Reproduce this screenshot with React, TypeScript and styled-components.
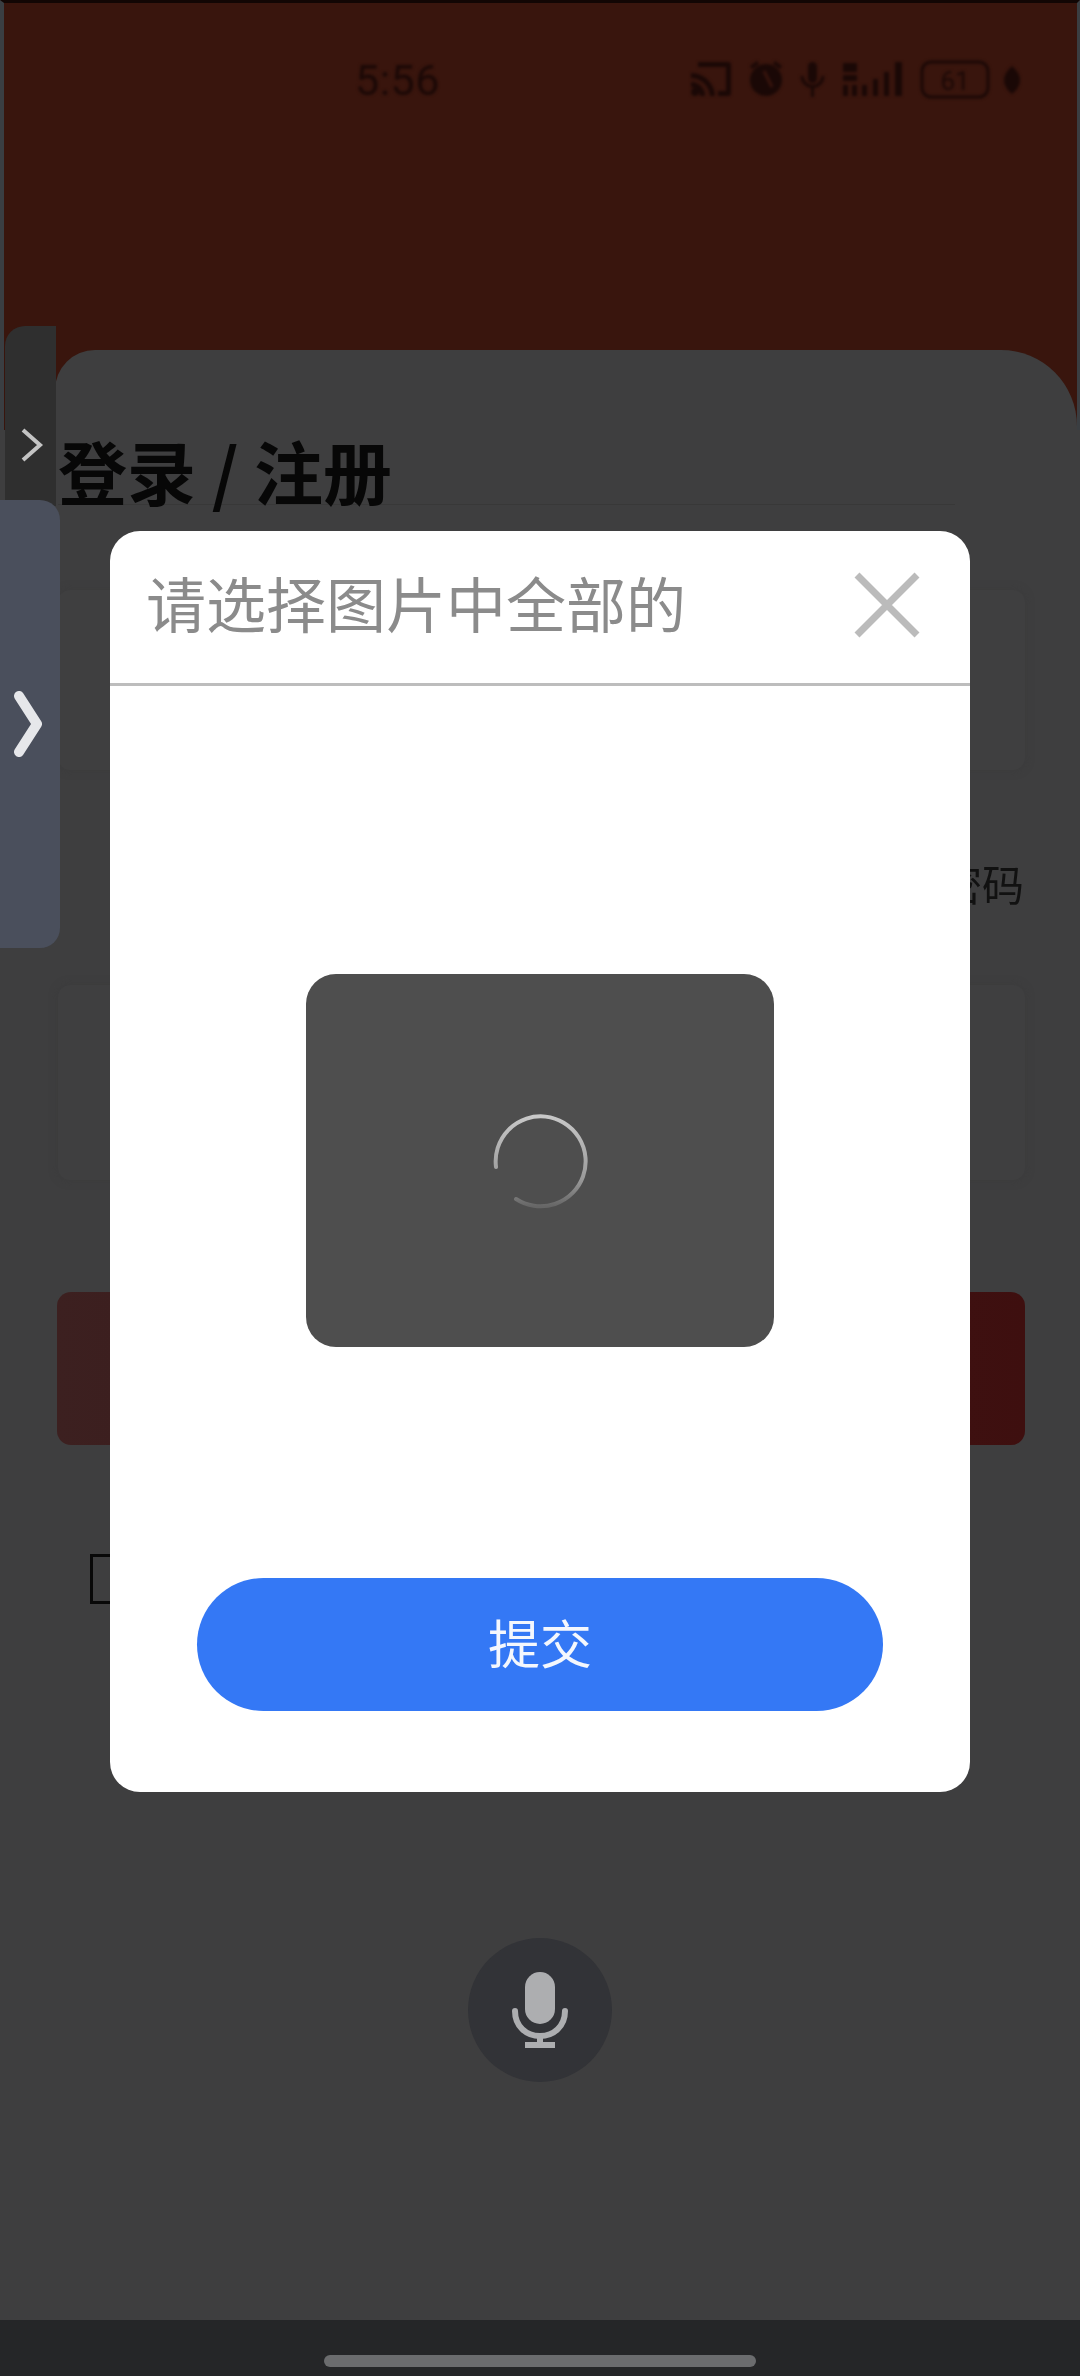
import styled, { createGlobalStyle } from "styled-components";

const GlobalStyle = createGlobalStyle`
  html, body {
    margin: 0;
    padding: 0;
    background: #3e3e3f;
  }
  * {
    box-sizing: border-box;
  }
`;

const Screen = styled("div")`
  position: relative;
  width: 1080px;
  height: 2376px;
  overflow: hidden;
  display: flex;
  flex-direction: column;
  background-color: #3e3e3f;
  font-family: "Noto Sans CJK SC", "Noto Sans", sans-serif;
`;
const TopArea = styled("header")`
  height: 430px;
  flex-shrink: 0;
  background-color: #39150d;
  border-top: 3px solid #120604;
  border-left: 4px solid #3a3e42;
  border-right: 3px solid #3a3e42;
`;
const StatusBar = styled("div")`
  display: flex;
  align-items: center;
  height: 50px;
  margin-top: 52px;
  padding-left: 351px;
  filter: blur(1.4px);
`;
const Clock = styled("span")`
  width: 336px;
  font-family: "Roboto", sans-serif;
  font-size: 43px;
  line-height: 50px;
  color: #1a0806;
  letter-spacing: 0.5px;
`;
const Sheet = styled("main")`
  flex: 1;
  margin: -80px 3px 0 55px;
  padding: 85px 0 0 3px;
  display: flex;
  flex-direction: column;
  background-color: #3e3e3f;
  border-radius: 40px 76px 0 0;
`;
const SheetTitle = styled("h1")`
  margin: 0;
  height: 70px;
  width: 897px;
  border-bottom: 1px solid #383838;
  font-size: 69px;
  line-height: 70px;
  font-weight: 700;
  color: #070707;
  white-space: nowrap;
  filter: blur(0.7px);
`;
const Field = styled("div")<{ $height: number; $top: number }>`
  width: 967px;
  height: ${(p) => p.$height}px;
  margin-top: ${(p) => p.$top}px;
  background-color: #3f3f40;
  border-radius: 12px;
  box-shadow: 0 0 10px rgba(54, 54, 54, 0.35);
`;
const ForgotRow = styled("div")`
  display: flex;
  justify-content: flex-end;
  width: 966px;
  height: 60px;
  margin-top: 83px;
  font-size: 42px;
  line-height: 60px;
  color: #111;
  filter: blur(0.7px);
`;
const LoginButton = styled("div")`
  width: 968px;
  height: 153px;
  margin: 112px 0 0 -1px;
  border-radius: 14px;
  background: linear-gradient(90deg, #3c2020 0%, #3e0f0f 100%);
`;
const AgreeCheckbox = styled("div")`
  width: 32px;
  height: 50px;
  margin: 109px 0 0 32px;
  border: 3px solid #080808;
`;
const MicButton = styled("button")`
  display: flex;
  align-items: center;
  justify-content: center;
  width: 144px;
  height: 144px;
  margin: 334px 0 0 410px;
  padding: 0;
  border: 0;
  border-radius: 50%;
  background-color: #323337;
`;
const BottomBar = styled("footer")`
  display: flex;
  align-items: flex-start;
  justify-content: center;
  flex-shrink: 0;
  height: 56px;
  padding-top: 35px;
  background-color: #252628;
`;
const HomePill = styled("div")`
  width: 432px;
  height: 12px;
  border-radius: 6px;
  background-color: #6b6c6e;
`;
const HandleTab = styled("div")`
  position: absolute;
  left: 5px;
  top: 326px;
  width: 51px;
  height: 180px;
  display: flex;
  align-items: center;
  justify-content: center;
  padding-left: 3px;
  padding-top: 58px;
  background-color: #2f2f2f;
  border-radius: 20px 0 0 0;
`;
const SideTab = styled("div")`
  position: absolute;
  left: 0;
  top: 500px;
  width: 60px;
  height: 448px;
  display: flex;
  align-items: center;
  padding-left: 13px;
  background-color: #4a4f5c;
  border-radius: 0 20px 20px 0;
`;
const Modal = styled("section")`
  position: absolute;
  left: 110px;
  top: 531px;
  width: 860px;
  height: 1261px;
  display: flex;
  flex-direction: column;
  background-color: #fff;
  border-radius: 30px;
  overflow: hidden;
`;
const ModalHeader = styled("div")`
  display: flex;
  align-items: center;
  justify-content: space-between;
  height: 155px;
  flex-shrink: 0;
  padding: 0 50px 10px 36px;
  border-bottom: 3px solid #bdbdbd;
`;
const ModalTitle = styled("h2")`
  margin: 0;
  font-size: 60px;
  line-height: 80px;
  font-weight: 400;
  color: #8b8b8b;
  white-space: nowrap;
`;
const CloseIcon = styled("svg")`
  margin-top: 6px;
`;
const ModalBody = styled("div")`
  display: flex;
  flex-direction: column;
  align-items: center;
  flex: 1;
`;
const LoadingBox = styled("div")`
  display: flex;
  align-items: center;
  justify-content: center;
  width: 468px;
  height: 373px;
  margin-top: 288px;
  background-color: #4e4e4e;
  border-radius: 30px;
`;
const SubmitButton = styled("button")`
  width: 686px;
  height: 133px;
  margin-top: 231px;
  padding: 0 0 6px;
  border: 0;
  border-radius: 67px;
  background-color: #3478f5;
  color: #f4f7fd;
  font-family: inherit;
  font-size: 52px;
  line-height: 60px;
`;

export default function App() {
  return (
    <Screen>
      <GlobalStyle />
      <TopArea>
        <StatusBar>
          <Clock>5:56</Clock>
          <svg width="332" height="44" viewBox="0 0 332 44" fill="#1a0806">
            <path d="M7 4h30a3 3 0 0 1 3 3v28a3 3 0 0 1-3 3H27v-5h8V9H7z" />
            <path d="M0 15a24 24 0 0 1 24 23h-5A19 19 0 0 0 0 20zM0 24a14 14 0 0 1 14 14H9a9 9 0 0 0-9-9z" />
            <circle cx="4" cy="34" r="4" />
            <circle cx="75" cy="22" r="16" />
            <path d="M59 8l7-5 2 3-7 5zM91 8l-7-5-2 3 7 5z" />
            <path d="M73 13l8 16" stroke="#39150d" strokeWidth="3" />
            <rect x="117" y="4" width="9" height="21" rx="4.500" />
            <path d="M111 18a10.500 10.500 0 0 0 21 0M121.500 28v11" fill="none" stroke="#1a0806" strokeWidth="3" />
            <rect x="152" y="5" width="14" height="9" />
            <rect x="152" y="17" width="14" height="6" />
            <rect x="152" y="27" width="5" height="11" />
            <rect x="161" y="27" width="5" height="11" />
            <rect x="171" y="27" width="5" height="11" />
            <rect x="182" y="21" width="5" height="17" />
            <rect x="193" y="14" width="5" height="24" />
            <rect x="204" y="4" width="7" height="34" />
            <rect x="231" y="4" width="66" height="35" rx="9" fill="none" stroke="#1a0806" strokeWidth="3" />
            <text x="264" y="32" textAnchor="middle" fontFamily="Roboto, sans-serif" fontSize="26">61</text>
            <path d="M321 8c5 5 8 9 8 14 0 5-3 10-8 14-5-4-8-9-8-14 0-5 3-9 8-14z" />
          </svg>
        </StatusBar>
      </TopArea>

      <Sheet>
        <SheetTitle>登录 / 注册</SheetTitle>
        <Field $height={180} $top={85} />
        <ForgotRow>密码</ForgotRow>
        <Field $height={195} $top={72} />
        <LoginButton />
        <AgreeCheckbox />
        <MicButton>
          <svg width="56" height="76" viewBox="0 0 56 76" fill="#adaeb0">
            <rect x="13" y="0" width="30" height="52" rx="15" />
            <path
              d="M3 39c0 15 11 25 25 25s25-10 25-25"
              fill="none"
              stroke="#adaeb0"
              strokeWidth="6"
              strokeLinecap="round"
            />
            <rect x="25" y="62" width="6" height="10" />
            <rect x="13" y="70" width="30" height="6" />
          </svg>
        </MicButton>
      </Sheet>

      <BottomBar>
        <HomePill />
      </BottomBar>

      <HandleTab>
        <svg width="24" height="36" viewBox="0 0 24 36" fill="none">
          <path d="M3 3l17 15L3 33" stroke="#c4c4c4" strokeWidth="4" />
        </svg>
      </HandleTab>
      <SideTab>
        <svg width="30" height="66" viewBox="0 0 30 66" fill="none">
          <path
            d="M6 5l18 28L6 61"
            stroke="#e6e7ea"
            strokeWidth="10"
            strokeLinecap="round"
            strokeLinejoin="round"
          />
        </svg>
      </SideTab>

      <Modal>
        <ModalHeader>
          <ModalTitle>请选择图片中全部的</ModalTitle>
          <CloseIcon width="66" height="66" viewBox="0 0 66 66" fill="none">
            <path d="M3 3l60 60M63 3L3 63" stroke="#bbbbbb" strokeWidth="7" />
          </CloseIcon>
        </ModalHeader>
        <ModalBody>
          <LoadingBox>
            <svg width="96" height="96" viewBox="0 0 96 96" fill="none">
              <defs>
                <linearGradient id="spin" x1="0" y1="0" x2="0" y2="1">
                  <stop offset="0" stopColor="#c8c8c8" />
                  <stop offset="0.7" stopColor="#9a9a9a" />
                  <stop offset="1" stopColor="#666666" />
                </linearGradient>
              </defs>
              <path
                d="M4 54A45 45 0 1 1 24 86"
                stroke="url(#spin)"
                strokeWidth="4"
                strokeLinecap="round"
              />
            </svg>
          </LoadingBox>
          <SubmitButton>提交</SubmitButton>
        </ModalBody>
      </Modal>
    </Screen>
  );
}
